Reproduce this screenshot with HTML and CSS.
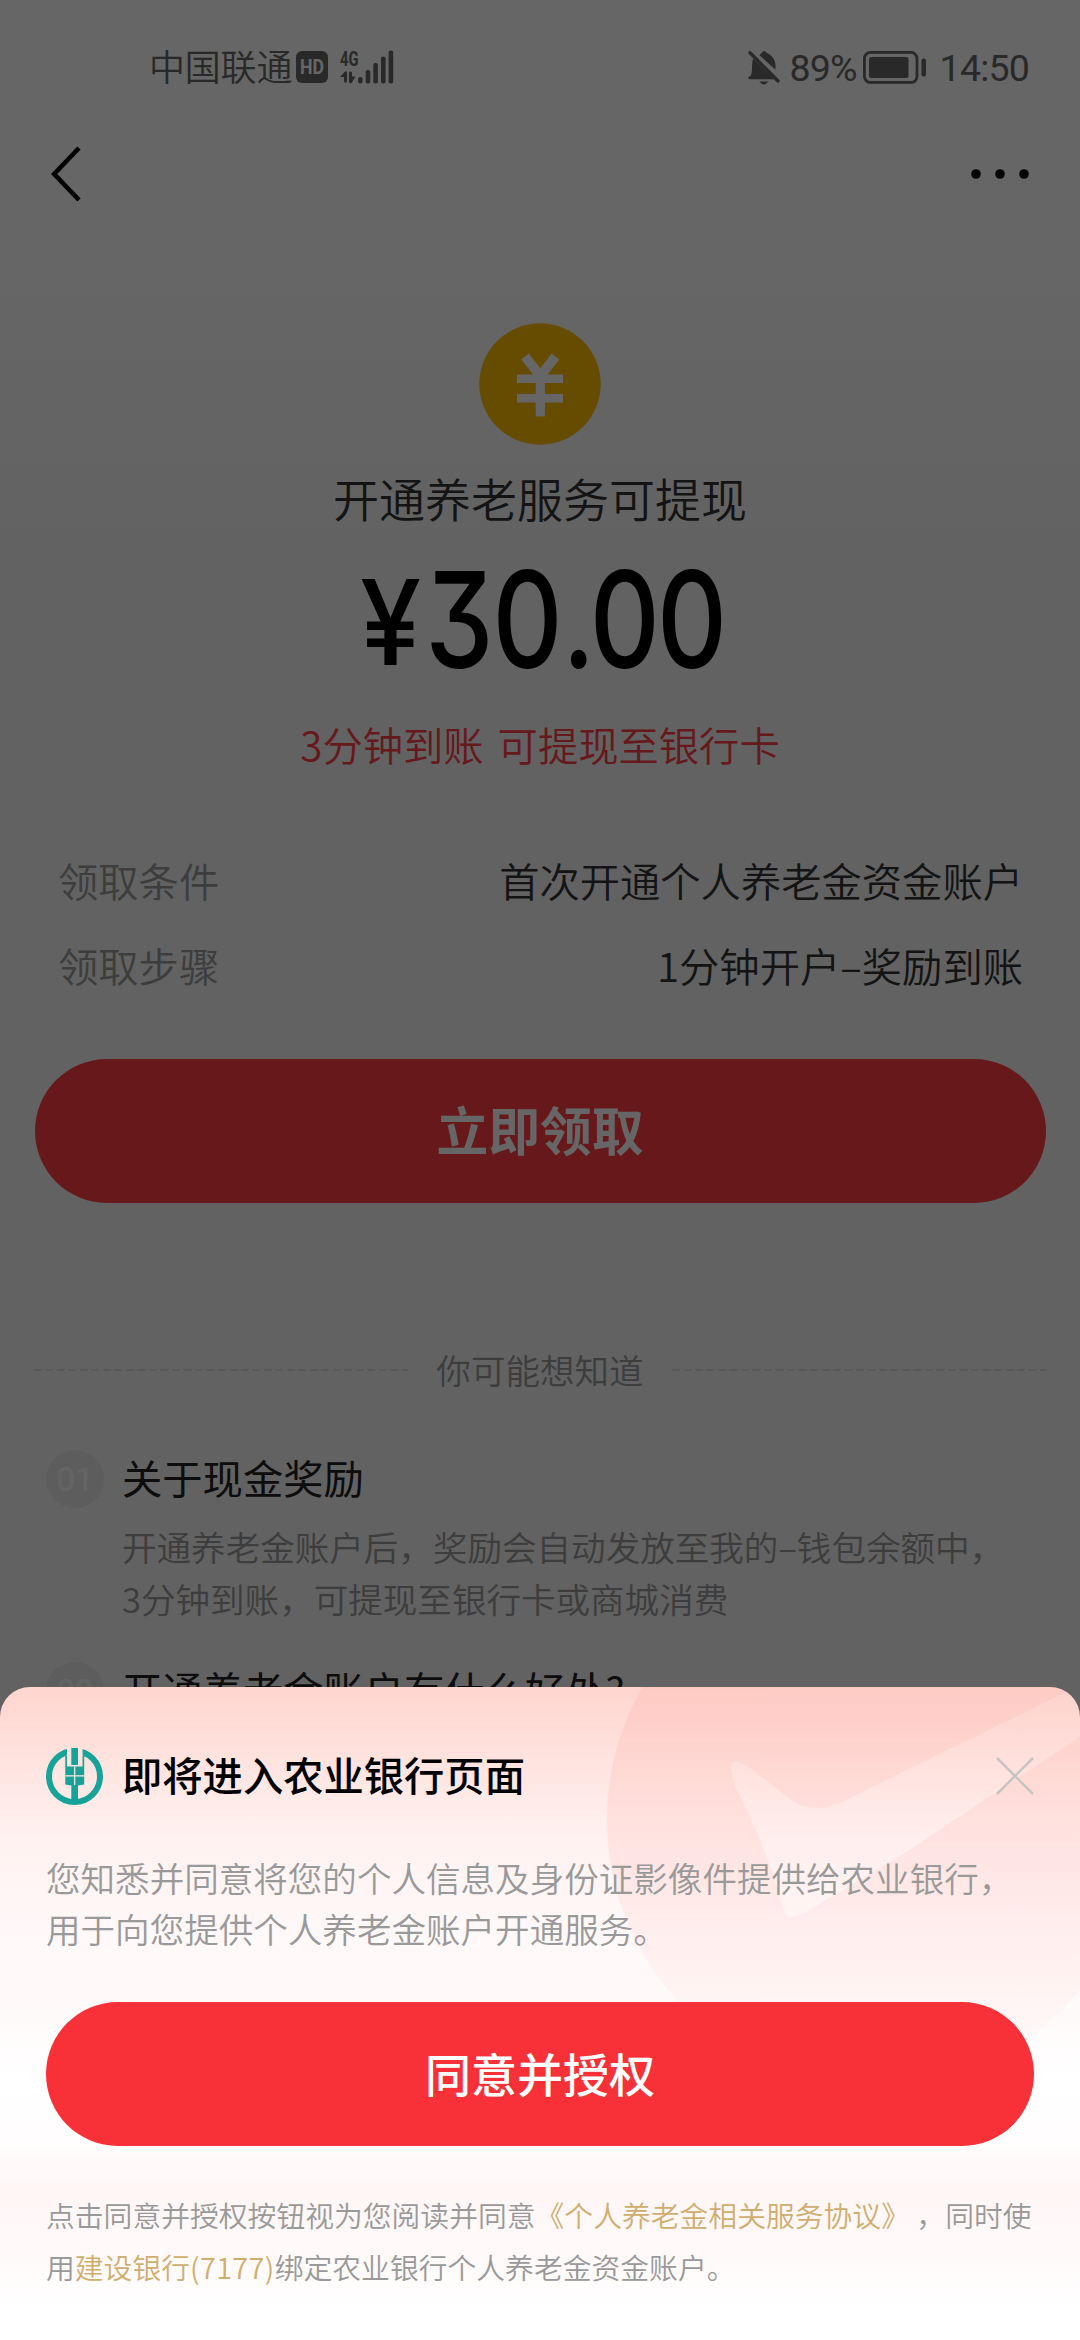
FILE: index.html
```html
<!DOCTYPE html>
<html lang="zh-CN">
<head>
<meta charset="utf-8">
<title>养老服务奖励</title>
<link rel="stylesheet" href="styles.css">
</head>
<body>
<div class="screen">
  <header class="status">
    <span class="carrier">中国联通</span>
    <svg class="hd" width="32" height="32" viewBox="0 0 32 32"><rect width="32" height="32" rx="6" fill="#666"/><text x="16" y="23" text-anchor="middle" textLength="24" lengthAdjust="spacingAndGlyphs" class="hd-text">HD</text></svg>
    <svg class="signal" width="54" height="46" viewBox="0 -6 54 46" fill="#666"><text x="0" y="15.500" textLength="18.500" lengthAdjust="spacingAndGlyphs" class="net-text">4G</text><path d="M0 27 5 21.500Q7 20.500 7 22.500V31.500Q5.500 34 4 31.500V27Z M9 22.500Q10.500 20.500 12 22.500V26.500H15.500L12 32.500Q9.500 34.500 9 32Z"/><rect x="18" y="27" width="4.600" height="6.500" rx="2.200"/><rect x="25.700" y="20" width="4.600" height="13.500" rx="1.800"/><rect x="33.300" y="13" width="4.600" height="20.500" rx="1.800"/><rect x="41" y="6.500" width="4.600" height="27" rx="1.800"/><rect x="48.600" y="0.500" width="4.600" height="33" rx="1.800"/></svg>
    <svg class="bell" width="32" height="35" viewBox="0 0 32 35"><path d="M11.500 5.200C12.600 4 13.500 3 15 1.600Q16 .4 17.500 1.600C18 2 18.500 3 20 3.500C24 5.500 27.500 10 27.500 15V19.800Z M5 8.500 26.500 29.200H1.200Q-.8 27.700 1.200 26.500L3 25.500C4.700 20 3.500 14 5 8.500Z M11.300 31.500H20.500Q16 37.300 11.300 31.500Z" fill="#666"/><path d="M2 2.800 30 31" stroke="#666" stroke-width="3.400" stroke-linecap="round"/></svg>
    <span class="battery-level">89%</span>
    <svg class="battery" width="63" height="33" viewBox="0 0 63 33"><rect x="1.400" y="1.400" width="52.600" height="30" rx="6" fill="none" stroke="#666" stroke-width="2.800"/><rect x="6" y="6" width="39.500" height="21" rx="2.500" fill="#666"/><rect x="58.500" y="7.500" width="4.500" height="18" rx="2" fill="#666"/></svg>
    <span class="clock">14:50</span>
  </header>
  <nav class="nav">
    <svg width="32" height="56" viewBox="0 0 32 56"><path d="M29 2 4.200 28 29 54" fill="none" stroke="#000" stroke-width="4.600"/></svg>
    <svg width="60" height="10" viewBox="0 0 60 10"><circle cx="6" cy="5" r="4.800"/><circle cx="30" cy="5" r="4.800"/><circle cx="54" cy="5" r="4.800"/></svg>
  </nav>
  <main class="main">
    <section class="hero">
      <svg class="coin" width="122" height="122" viewBox="0 0 122 122"><circle cx="61" cy="61" r="60.700" fill="#ffbf00"/><g fill="none" stroke="#fff"><path d="M46 33.500 61.300 53 76.500 33.500" stroke-width="9.500"/><path d="M38 55.700H84M38 75.300H84" stroke-width="8.600"/><path d="M61.300 49V93.500" stroke-width="9.200"/></g></svg>
      <h1 class="hero-title">开通养老服务可提现</h1>
      <svg class="price" width="400" height="180" viewBox="0 -30 400 180"><text class="price-sign" transform="translate(20 105) scale(.93 1)">¥</text><text class="price-num" transform="translate(1 108) scale(.81 1)" x="104 187 273 307 390">30.00</text></svg>
      <p class="hero-sub">3分钟到账 可提现至银行卡</p>
    </section>
    <dl class="facts">
      <div class="fact"><dt>领取条件</dt><dd>首次开通个人养老金资金账户</dd></div>
      <div class="fact"><dt>领取步骤</dt><dd>1分钟开户–奖励到账</dd></div>
    </dl>
    <button class="claim">立即领取</button>
    <div class="divider"><i class="rule"></i><span>你可能想知道</span><i class="rule"></i></div>
    <section class="faq">
      <span class="num">01</span>
      <div class="faq-body">
        <h2>关于现金奖励</h2>
        <p>开通养老金账户后，奖励会自动发放至我的–钱包余额中，<br>3分钟到账，可提现至银行卡或商城消费</p>
      </div>
    </section>
    <section class="faq">
      <span class="num">02</span>
      <div class="faq-body"><h2>开通养老金账户有什么好处?</h2></div>
    </section>
  </main>
  <div class="overlay"></div>
  <section class="sheet">
    <svg class="sheet-art" width="1080" height="653" viewBox="0 0 1080 653">
      <defs>
        <linearGradient id="disc" x1="0" y1="0" x2="0" y2="400" gradientUnits="userSpaceOnUse"><stop offset="0" stop-color="#ff8278" stop-opacity=".13"/><stop offset=".45" stop-color="#ff8278" stop-opacity=".12"/><stop offset=".75" stop-color="#ff8278" stop-opacity=".05"/><stop offset="1" stop-color="#ff8278" stop-opacity="0"/></linearGradient>
        <mask id="tick"><rect width="1080" height="653" fill="#fff"/><path d="M731 84Q730 73 737 74Q743 76 750 81L794 115Q803 121 818 121Q830 121 842 115L1084 -4V47L905 166 806 225Q800 229 790 230Q786 230 784 224Q765 155 735 100Z" fill="#333"/></mask>
      </defs>
      <circle cx="874" cy="133" r="267" fill="url(#disc)" mask="url(#tick)"/>
    </svg>
    <div class="sheet-head">
      <svg width="57" height="57" viewBox="0 0 57 57"><circle cx="28.500" cy="28.500" r="25.500" fill="none" stroke="#18a398" stroke-width="6"/><path d="M21 0H36.500V19H21Z" fill="#ffe3de"/><path d="M25.300 0H32V17H25.300Z M19.300 8H21V18.500H36.500V8H38.200V36.500L32 37.500V54H25.300V37.500L19.300 36.500Z" fill="#18a398"/><path d="M28.700 18.500V37M19.300 27.800H38.200" stroke="#ffe9e5" stroke-width="1.200"/></svg>
      <h3>即将进入农业银行页面</h3>
      <svg class="close" width="38" height="38" viewBox="0 0 38 38"><path d="M1 1 37 37M37 1 1 37" stroke="#c8c4c3" stroke-width="2.500"/></svg>
    </div>
    <p class="notice">您知悉并同意将您的个人信息及身份证影像件提供给农业银行，<br>用于向您提供个人养老金账户开通服务。</p>
    <button class="agree">同意并授权</button>
    <p class="terms">点击同意并授权按钮视为您阅读并同意<a>《个人养老金相关服务协议》</a> ，同时使<br>用<a>建设银行<span class="tail">(7177)</span></a>绑定农业银行个人养老金资金账户。</p>
  </section>
</div>
</body>
</html>
```
FILE: styles.css
```css
* { box-sizing: border-box; margin: 0; padding: 0; }
body { font-family: "Noto Sans CJK SC", sans-serif; font-weight: 350; color: #333; }
h1, h2, h3 { font-weight: inherit; }
button { border: 0; font-family: inherit; color: #fff; display: block; }
svg { display: block; flex: none; }
.screen { position: relative; width: 1080px; height: 2340px; overflow: hidden; background: linear-gradient(#fff 240px, #f4f4f5 620px); }

.status { display: flex; align-items: center; height: 134px; padding: 0 51px 0 149px; color: #666; white-space: nowrap; }
.carrier { font-size: 36px; line-height: 50px; width: 149px; letter-spacing: -.2px; padding-bottom: 5px; }
.hd-text { font: 700 20px Roboto, sans-serif; fill: #fff; }
.net-text { font: 700 21px Roboto, sans-serif; }
.signal { margin-left: 12px; }
.bell { margin-left: 354px; }
.battery-level { margin-left: 9px; width: 74px; }
.battery-level, .clock { font: 400 37.500px/50px Roboto, sans-serif; letter-spacing: -.8px; padding-top: 2px; }
.clock { margin-left: 14px; }

.nav { display: flex; align-items: center; justify-content: space-between; height: 80px; padding: 0 50px 0 50px; }

.hero { display: flex; flex-direction: column; align-items: center; padding-top: 109px; }
.hero-title { margin-top: 22px; font-size: 46px; line-height: 60px; }
.price { margin-top: 3px; }
.price-num, .price-sign { font-family: Inter, sans-serif; font-weight: 500; font-feature-settings: "cv09"; fill: #000; }
.price-num { font-size: 134px; }
.price-sign { font-size: 118px; }
.hero-sub { margin-top: 6px; font-size: 40.300px; line-height: 56px; word-spacing: 5px; color: #ff4046; }

.facts { display: flex; flex-direction: column; gap: 29.500px; padding: 79.500px 57px 0 58px; font-size: 40.300px; line-height: 56px; }
.fact { display: flex; justify-content: space-between; }
.fact dt { color: #999; }

.claim { width: 1011px; height: 144px; margin: 66px auto 0; padding-bottom: 5px; border-radius: 72px; background: #ff3c43; font-size: 51.800px; font-weight: 700; }

.divider { display: flex; align-items: center; gap: 28px; margin: 141px 34px 56px; font-size: 34.560px; line-height: 50px; color: #999; }
.rule { flex: 1; height: 2px; margin-top: 2px; background: repeating-linear-gradient(90deg, #e2e2e2 0 8px, transparent 8px 11.500px); }

.faq { display: flex; padding: 0 46px; margin-bottom: 38px; }
.num { width: 58px; height: 58px; margin-right: 18px; border-radius: 50%; background: #e8e8e8; color: #fafafa; text-align: center; font: 500 33px/59px Roboto, sans-serif; }
.faq-body { margin-top: -2.500px; }
.faq h2 { font-size: 40.300px; line-height: 58px; font-weight: 400; color: #222; }
.faq p { margin-top: 14.500px; font-size: 34.560px; line-height: 52px; color: #999; }

.overlay { position: absolute; inset: 0; background: rgba(0, 0, 0, .6); }

.sheet { position: absolute; left: 0; right: 0; bottom: 0; height: 653px; padding: 61px 46px 0; border-radius: 30px 30px 0 0; overflow: hidden;
  background: linear-gradient(#ffd5cf 0, #fedfda 53px, #ffebe8 113px, #fff3f2 163px, #fff8f8 243px, #fffafa 323px, #fff 393px, #fffdfd 453px, #fff6f6 503px, #fffafa 573px, #fff 620px); }
.sheet-art { position: absolute; left: 0; top: 0; }
.sheet-head, .notice, .agree, .terms { position: relative; }
.sheet-head { display: flex; align-items: center; height: 56px; }
.sheet-head h3 { margin-left: 19px; padding-bottom: 4px; font-size: 40.300px; line-height: 56px; font-weight: 500; color: #000; }
.close { margin-left: auto; }
.notice { margin-top: 48px; font-size: 34.560px; line-height: 51.200px; color: #999; white-space: nowrap; }
.agree { width: 988px; height: 144px; margin-top: 47.500px; padding-bottom: 3px; border-radius: 72px; background: #f83037; font-size: 46px; font-weight: 500; }
.terms { margin-top: 43.500px; font-size: 28.800px; line-height: 51.500px; color: #999; white-space: nowrap; }
.terms a { color: #d0ae70; }
.tail { letter-spacing: .4px; }
```
